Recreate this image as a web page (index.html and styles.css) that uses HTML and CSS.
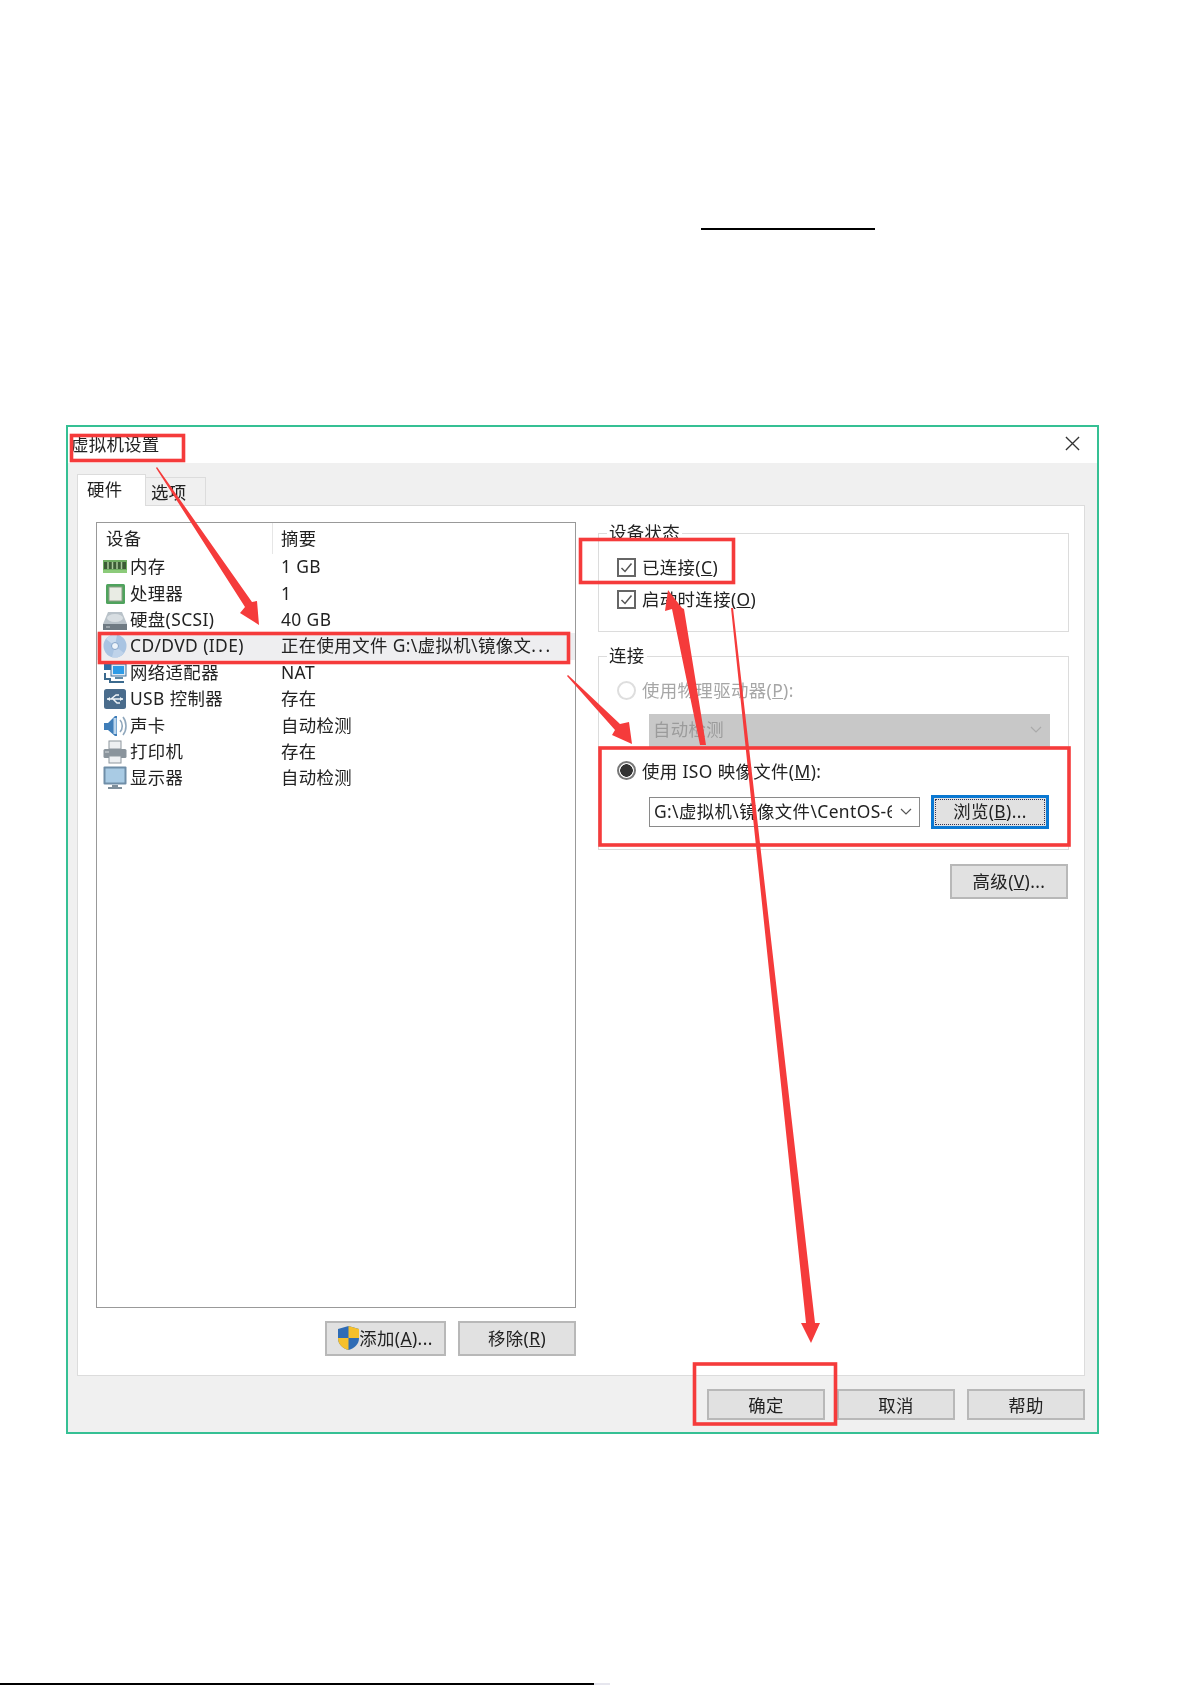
FILE: index.html
```html
<!DOCTYPE html>
<html lang="zh-CN">
<head>
<meta charset="utf-8">
<title>虚拟机设置</title>
<link rel="stylesheet" href="styles.css">
</head>
<body>
<div class="rule-top"></div>
<section class="window">
  <header class="titlebar">
    <span class="title">虚拟机设置</span>
    <svg class="close" viewBox="0 0 16 16"><path d="M1 1L15 15M15 1L1 15"/></svg>
  </header>
  <div class="client">
    <div class="tabs">
      <div class="tab tab-active">硬件</div>
      <div class="tab">选项</div>
    </div>
    <div class="panel">
      <div class="left">
        <div class="list">
          <div class="list-head"><div class="col-a">设备</div><div class="col-b">摘要</div></div>
          <div class="row">
            <div class="col-name">
              <svg class="ico" viewBox="0 0 24 24"><rect y="5" width="24" height="13" fill="#6fae62"/><rect x="1" y="7" width="22" height="7" fill="#3c5d36"/><path d="M5 7v7M9.5 7v7M14 7v7M18.5 7v7" stroke="#a9c99c" stroke-width="1.5"/><rect y="15" width="24" height="3" fill="#8ccb7a"/></svg>
              <span>内存</span>
            </div>
            <div class="col-val">1 GB</div>
          </div>
          <div class="row">
            <div class="col-name">
              <svg class="ico" viewBox="0 0 24 24"><rect x="3" y="2" width="19" height="20" rx="1.5" fill="#4fa35d"/><rect x="6" y="5" width="13" height="14" fill="#e9ece4" stroke="#8d9e85"/></svg>
              <span>处理器</span>
            </div>
            <div class="col-val">1</div>
          </div>
          <div class="row">
            <div class="col-name">
              <svg class="ico" viewBox="0 0 24 24"><path d="M5 4h14l5 12H0z" fill="#b9c2c9"/><path d="M0 16h24v6H0z" fill="#6f7a83"/><ellipse cx="12" cy="10" rx="8" ry="4" fill="#d8dee2"/><path d="M3 19h4" stroke="#c6ccd0"/></svg>
              <span>硬盘(SCSI)</span>
            </div>
            <div class="col-val">40 GB</div>
          </div>
          <div class="row row-selected">
            <div class="col-name">
              <svg class="ico" viewBox="0 0 24 24"><circle cx="12" cy="12" r="11.5" fill="#a9c4e2"/><path d="M12 12L3 5A11.5 11.5 0 0 1 14 1z" fill="#c9dbee"/><path d="M12 12L21 19A11.5 11.5 0 0 1 9 23z" fill="#bfd3ea"/><circle cx="12" cy="12" r="3.5" fill="#eef4fa" stroke="#86a5c9"/></svg>
              <span>CD/DVD (IDE)</span>
            </div>
            <div class="col-val">正在使用文件 G:\虚拟机\镜像文<span class="ell">...</span></div>
          </div>
          <div class="row">
            <div class="col-name">
              <svg class="ico" viewBox="0 0 24 24"><rect x="1" y="1" width="10" height="8" fill="#2f6ea5"/><path d="M2 12v6h5v3h14" fill="none" stroke="#3b6a8e" stroke-width="2"/><rect x="8" y="3" width="15" height="12" fill="#dfe9f2" stroke="#3c6f9c"/><rect x="10" y="5" width="11" height="8" fill="#2e9be6"/><path d="M12 16h8v2h-8z" fill="#5f8aa8"/></svg>
              <span>网络适配器</span>
            </div>
            <div class="col-val">NAT</div>
          </div>
          <div class="row">
            <div class="col-name">
              <svg class="ico" viewBox="0 0 24 24"><rect x="1" y="2" width="22" height="20" rx="2.5" fill="#4a6c8c"/><path d="M4 12h16M8 12l5-4h3M10 12l4 4h3" fill="none" stroke="#eef3f7" stroke-width="1.5"/><path d="M4 12l3-2v4zM20 12l-3-2v4z" fill="#eef3f7"/></svg>
              <span>USB 控制器</span>
            </div>
            <div class="col-val">存在</div>
          </div>
          <div class="row">
            <div class="col-name">
              <svg class="ico" viewBox="0 0 24 24"><path d="M1 9h4l7-7h2v20h-2l-7-6H1z" fill="#3f7db8"/><path d="M12 4v16" stroke="#b9d4ec" stroke-width="3"/><path d="M17 6c3 3 3 9 0 12M20 3c4 5 4 13 0 18" fill="none" stroke="#8fa7bc" stroke-width="1.6"/></svg>
              <span>声卡</span>
            </div>
            <div class="col-val">自动检测</div>
          </div>
          <div class="row">
            <div class="col-name">
              <svg class="ico" viewBox="0 0 24 24"><rect x="6" y="1" width="12" height="8" fill="#eef0f2" stroke="#8e979e"/><rect x="0.5" y="9" width="23" height="9" rx="1.5" fill="#8a949c"/><rect x="6" y="16" width="12" height="7" fill="#eef0f2" stroke="#8e979e"/><path d="M2 12h4" stroke="#d5dadd"/></svg>
              <span>打印机</span>
            </div>
            <div class="col-val">存在</div>
          </div>
          <div class="row">
            <div class="col-name">
              <svg class="ico" viewBox="0 0 24 24"><rect x="0.5" y="0.5" width="23" height="18" rx="1" fill="#6f8ea8"/><rect x="2.5" y="2.5" width="19" height="14" fill="#a9cbe4"/><path d="M9 19h6v2H9zM5 21h14v2H5z" fill="#7f8f9b"/></svg>
              <span>显示器</span>
            </div>
            <div class="col-val">自动检测</div>
          </div>
        </div>
        <div class="list-actions">
          <button class="btn btn-add">
            <svg class="shield" viewBox="1 1 20 24" preserveAspectRatio="none"><path d="M11 1l10 3v9c0 6-4 10-10 12C5 23 1 19 1 13V4z" fill="#2f6cb5"/><path d="M11 1l10 3v9H11zM11 13v12C5 23 1 19 1 13z" fill="#f6c02c"/></svg>
            <span>添加(<u>A</u>)...</span>
          </button>
          <button class="btn btn-remove">移除(<u>R</u>)</button>
        </div>
      </div>
      <div class="right">
        <fieldset class="group group-status">
          <legend>设备状态</legend>
          <div class="opt">
            <span class="check"><svg viewBox="0 0 15 15"><path d="M2.5 8l3.5 3.5L12.5 3.5"/></svg></span>
            <span class="opt-label">已连接(<u>C</u>)</span>
          </div>
          <div class="opt">
            <span class="check"><svg viewBox="0 0 15 15"><path d="M2.5 8l3.5 3.5L12.5 3.5"/></svg></span>
            <span class="opt-label">启动时连接(<u>O</u>)</span>
          </div>
        </fieldset>
        <fieldset class="group group-conn">
          <legend>连接</legend>
          <div class="opt opt-off">
            <span class="radio"></span>
            <span class="opt-label">使用物理驱动器(<u>P</u>):</span>
          </div>
          <div class="select select-off">
            <span>自动检测</span>
            <svg class="chev" viewBox="0 0 12 7"><path d="M1 1l5 5 5-5"/></svg>
          </div>
          <div class="opt opt-iso">
            <span class="radio radio-on"></span>
            <span class="opt-label">使用 ISO 映像文件(<u>M</u>):</span>
          </div>
          <div class="iso-row">
            <div class="select select-iso">
              <span class="select-text">G:\虚拟机\镜像文件\CentOS-6</span>
              <svg class="chev" viewBox="0 0 12 7"><path d="M1 1l5 5 5-5"/></svg>
            </div>
            <button class="btn btn-browse"><span class="focus">浏览(<u>B</u>)...</span></button>
          </div>
        </fieldset>
        <div class="adv-row"><button class="btn btn-adv">高级(<u>V</u>)...</button></div>
      </div>
    </div>
    <div class="footer">
      <button class="btn btn-foot">确定</button>
      <button class="btn btn-foot">取消</button>
      <button class="btn btn-foot">帮助</button>
    </div>
  </div>
</section>
<div class="rule-bottom"><i></i><b></b></div>
<svg class="marks" viewBox="0 0 1191 1685">
  <g class="boxes">
    <rect x="71.5" y="435.5" width="112" height="25"/>
    <rect x="99.5" y="633.5" width="469" height="29"/>
    <rect x="580.5" y="539.5" width="153" height="43"/>
    <rect x="600" y="748" width="469" height="97"/>
    <rect x="694.5" y="1364" width="141" height="60"/>
  </g>
  <g class="arrows">
    <polygon points="157,467 252,602 257,601 259,625 240,613 245,607 156,468"/>
    <polygon points="568,675 620,724 629,722 632,744 612,735 615,730 567,676"/>
    <polygon points="706,745 700,745 672,609 665,611 668,590 682,608 684,609"/>
    <polygon points="731,608 733,608 815,1323 820,1323 811,1343 801,1323 806,1323"/>
  </g>
</svg>
</body>
</html>
```
FILE: styles.css
```css
* { box-sizing: border-box; }
html, body { margin: 0; padding: 0; }
body {
  position: relative;
  width: 1191px;
  height: 1685px;
  overflow: hidden;
  background: #fff;
  color: #222;
  font-family: "Noto Sans", "Noto Sans CJK SC", sans-serif;
  font-size: 17.4px;
  line-height: 20px;
  letter-spacing: 0.4px;
}
.rule-top { width: 174px; height: 2px; margin: 228px 0 0 701px; background: #000; }
.window {
  width: 1033px;
  height: 1009px;
  margin: 195px 0 0 66px;
  border: 2px solid #35c094;
  display: flex;
  flex-direction: column;
  background: #f0f0f0;
  filter: blur(0.4px);
}
.titlebar {
  height: 36px;
  flex: none;
  background: #fff;
  display: flex;
  align-items: center;
  justify-content: space-between;
  padding: 0 17px 3px 3px;
}
.title { font-size: 17.5px; letter-spacing: 0.2px; }
.close { width: 15px; height: 15px; }
.close path { fill: none; stroke: #333; stroke-width: 1.4; }
.client { flex: 1; display: flex; flex-direction: column; padding: 11px 12px 0 9px; }
.tabs { display: flex; height: 31px; align-items: flex-end; flex: none; }
.tab {
  width: 60px;
  height: 28px;
  text-align: left;
  padding-left: 5px;
  line-height: 28px;
  background: #f0f0f0;
  border: 1px solid #dcdcdc;
  border-bottom: 0;
  border-left: 0;
}
.tab-active {
  width: 69px;
  height: 32px;
  line-height: 28px;
  padding-left: 9px;
  background: #fff;
  border-left: 1px solid #dcdcdc;
  position: relative;
  z-index: 1;
  margin-bottom: -1px;
}
.panel {
  height: 871px;
  flex: none;
  background: #fff;
  border: 1px solid #dcdcdc;
  padding: 16px 15px 0 18px;
  display: grid;
  grid-template-columns: 480px 471px;
  column-gap: 22px;
}
.list {
  height: 786px;
  border: 1px solid #999;
  background: #fff;
}
.list-head { height: 31px; display: flex; line-height: 30px; }
.col-a { width: 176px; padding-left: 9px; border-right: 1px solid #e6e6e6; }
.col-b { padding-left: 8px; }
.row { height: 26.4px; display: flex; align-items: center; }
.row-selected { background: #eeeef0; }
.col-name { width: 176px; display: flex; align-items: center; gap: 3px; padding-left: 6px; white-space: nowrap; }
.col-name span { margin-bottom: 2px; }
.col-val { padding-left: 8px; white-space: nowrap; margin-bottom: 2px; }
.ell { letter-spacing: 2.4px; }
.ico { width: 24px; height: 24px; flex: none; }
.list-actions { display: flex; justify-content: flex-end; gap: 12px; margin-top: 13px; }
.btn {
  font: inherit;
  letter-spacing: inherit;
  color: #222;
  background: #e1e1e1;
  border: 2px solid #b8b8b8;
  padding: 0;
  display: flex;
  align-items: center;
  justify-content: center;
}
.btn-add { width: 121px; height: 35px; padding-bottom: 2px; }
.btn-remove { width: 118px; height: 35px; padding-bottom: 2px; }
.shield { width: 21px; height: 24px; flex: none; }
.right { margin-top: 1px; }
.group { margin: 0; padding: 0 0 0 18px; border: 1px solid #dcdcdc; min-width: 0; }
.group legend { margin-left: -10px; padding: 0 2px 2px; line-height: 18px; }
.group-status { height: 109px; padding-top: 15px; }
.group-conn { height: 204px; margin-top: 14px; padding-top: 15px; }
.opt { display: flex; align-items: center; gap: 6px; height: 19px; }
.opt + .opt { margin-top: 13px; }
.opt-label { margin-bottom: 2px; }
.check {
  width: 19px;
  height: 19px;
  flex: none;
  border: 2px solid #666;
  display: block;
}
.check svg { display: block; width: 15px; height: 15px; }
.check path { fill: none; stroke: #555; stroke-width: 1.5; }
.radio {
  width: 19px;
  height: 19px;
  flex: none;
  border: 2px solid #dedede;
  border-radius: 50%;
  background: #fff;
}
.radio-on {
  border-color: #777;
  background: radial-gradient(circle, #333 0 6px, #fff 6.5px);
}
.opt-off { color: #a6a6a6; }
.select {
  display: flex;
  align-items: center;
  justify-content: space-between;
  padding-left: 4px;
}
.select-off {
  width: 401px;
  height: 33px;
  margin: 14px 0 0 32px;
  background: #c8c8c8;
  color: #9b9b9b;
  padding-right: 8px;
  padding-bottom: 3px;
}
.opt-iso { margin-top: 14px; }
.opt-iso .opt-label { margin-bottom: 0; }
.chev { width: 12px; height: 7px; flex: none; }
.chev path { fill: none; stroke: #555; stroke-width: 1.2; }
.select-off .chev path { stroke: #aaa; }
.iso-row { display: flex; align-items: center; margin: 15px 0 0 32px; gap: 11px; }
.select-iso { width: 271px; height: 30px; border: 1px solid #8a8a8a; padding-right: 7px; padding-bottom: 2px; gap: 8px; background: #fff; }
.select-text { flex: 1; overflow: hidden; white-space: nowrap; }
.btn-browse { width: 118px; height: 34px; border: 3px solid #0a78d2; }
.focus {
  width: 110px;
  height: 26px;
  border: 1px dotted #335;
  line-height: 22px;
  text-align: center;
}
.adv-row { display: flex; justify-content: flex-end; margin: 14px 1px 0 0; }
.btn-adv { width: 118px; height: 35px; padding-bottom: 2px; }
.footer { display: flex; justify-content: flex-end; gap: 12px; padding: 13px 0 0 0; }
.btn-foot { width: 118px; height: 31px; }
.rule-bottom { display: flex; margin-top: 249px; height: 2px; }
.rule-bottom i { width: 594px; background: #000; }
.rule-bottom b { width: 16px; background: #e6e6ee; }
.marks { position: absolute; left: 0; top: 0; width: 1191px; height: 1685px; pointer-events: none; }
.boxes rect { fill: none; stroke: #f53b3b; stroke-width: 3.6; }
.arrows polygon { fill: #f53b3b; }
```
